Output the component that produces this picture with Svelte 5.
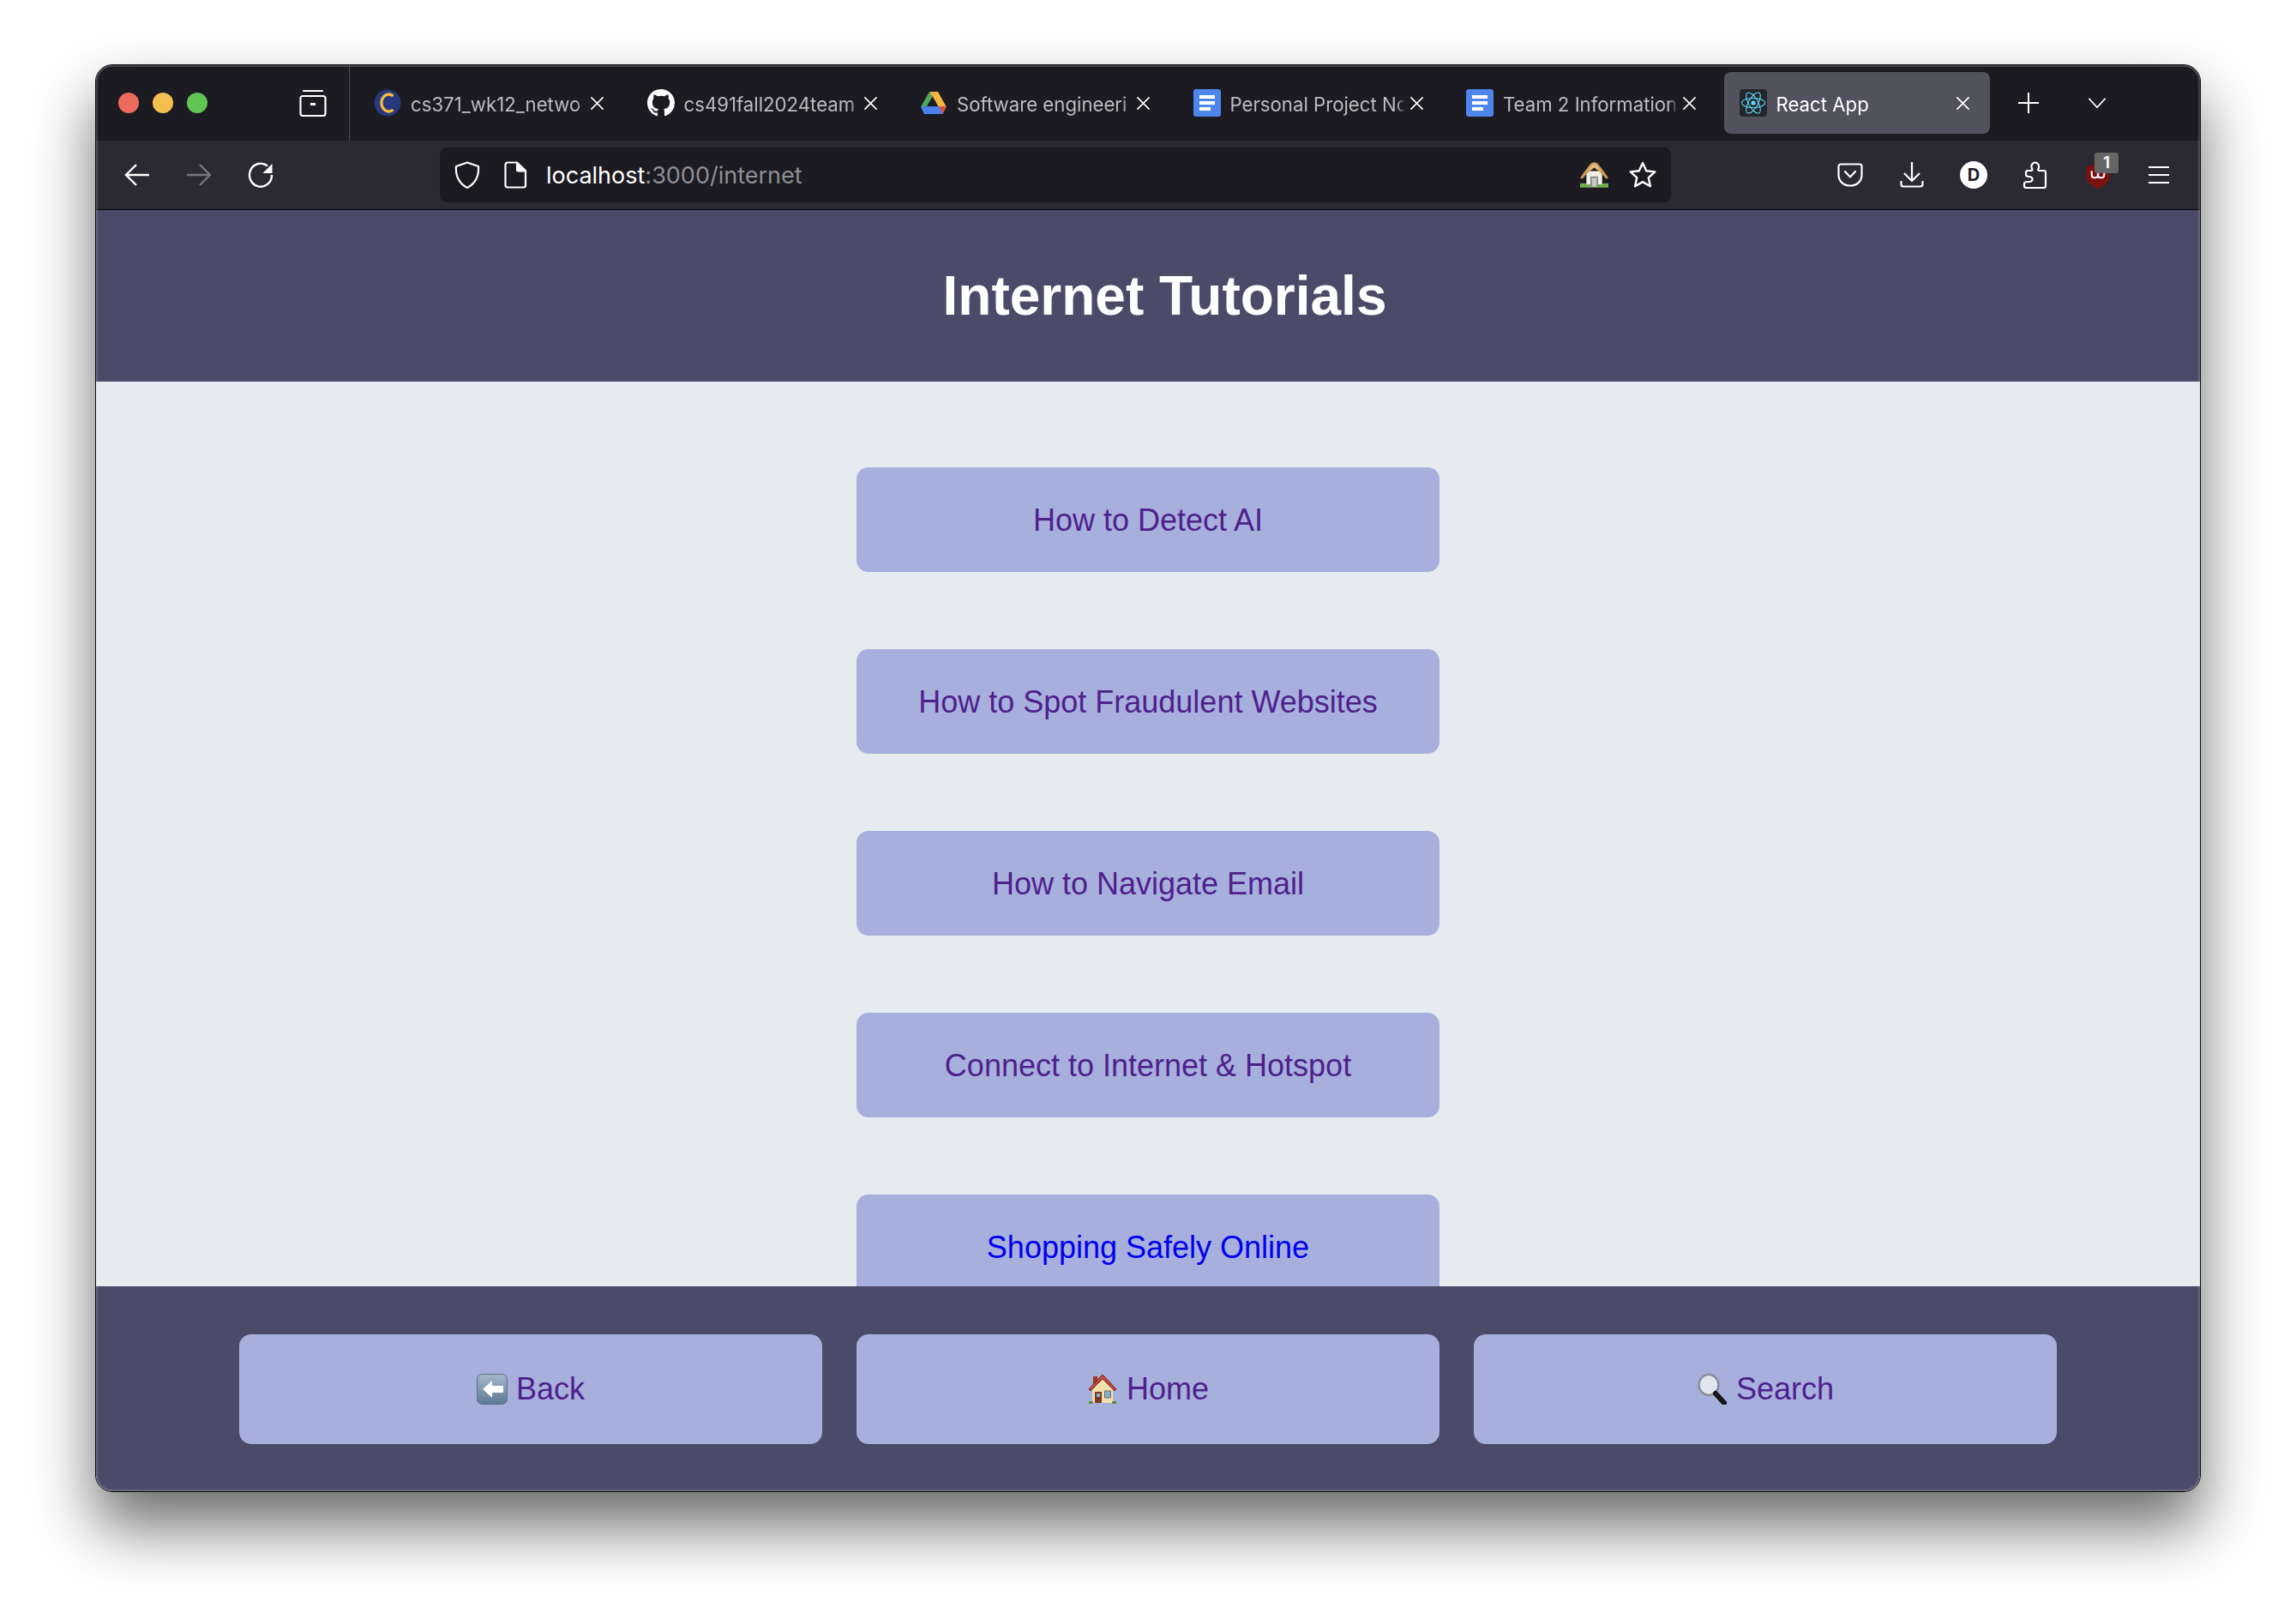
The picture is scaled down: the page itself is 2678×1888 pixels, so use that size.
<script>
  const tabs = [
    { icon: "canvas", label: "cs371_wk12_netwo" },
    { icon: "github", label: "cs491fall2024team" },
    { icon: "drive", label: "Software engineeri" },
    { icon: "docs", label: "Personal Project No" },
    { icon: "docs", label: "Team 2 Information" },
    { icon: "react", label: "React App", active: true }
  ];

  const tutorials = [
    { label: "How to Detect AI", visited: true },
    { label: "How to Spot Fraudulent Websites", visited: true },
    { label: "How to Navigate Email", visited: true },
    { label: "Connect to Internet & Hotspot", visited: true },
    { label: "Shopping Safely Online", visited: false }
  ];
</script>

{#snippet favicon(name)}
  {#if name === "canvas"}
    <svg class="fav" viewBox="0 0 32 32">
      <circle cx="16" cy="16" r="15.5" fill="#27397a" />
      <path d="M22.500 8a8.500 10 0 1 0 0 16" fill="none" stroke="#f3b93c" stroke-width="3.4" />
    </svg>
  {:else if name === "github"}
    <svg class="fav" viewBox="0 0 16 16">
      <path fill="#fff" d="M8 0C3.58 0 0 3.58 0 8c0 3.54 2.29 6.53 5.47 7.59.4.07.55-.17.55-.38 0-.19-.01-.82-.01-1.49-2.01.37-2.53-.49-2.69-.94-.09-.23-.48-.94-.82-1.13-.28-.15-.68-.52-.01-.53.63-.01 1.08.58 1.23.82.72 1.21 1.87.87 2.33.66.07-.52.28-.87.51-1.07-1.78-.2-3.64-.89-3.64-3.95 0-.87.31-1.59.82-2.15-.08-.2-.36-1.02.08-2.12 0 0 .67-.21 2.2.82.64-.18 1.32-.27 2-.27.68 0 1.36.09 2 .27 1.53-1.04 2.2-.82 2.2-.82.44 1.1.16 1.92.08 2.12.51.56.82 1.27.82 2.15 0 3.07-1.87 3.75-3.65 3.95.29.25.54.73.54 1.48 0 1.07-.01 1.93-.01 2.2 0 .21.15.46.55.38A8.013 8.013 0 0016 8c0-4.42-3.58-8-8-8z" />
    </svg>
  {:else if name === "drive"}
    <svg class="fav" viewBox="0 0 32 32">
      <path fill="#4fa85b" d="M11 3h7L7 21.5 1 20.5z" />
      <path fill="#f4b63f" d="M11.5 3H21l10 18h-9z" />
      <path fill="#4a80ec" d="M7.5 20h23.5l-4.500 9H5l-4-8.500z" />
      <path fill="#d9503f" d="M22 20h9l-4.500 9z" />
    </svg>
  {:else if name === "docs"}
    <svg class="fav" viewBox="0 0 32 32">
      <rect x="0" width="32" height="32" rx="3" fill="#4f86ec" />
      <path fill="#fff" d="M7 7h18v4H7zM7 14h18v4H7zM7 21h13v4H7z" />
    </svg>
  {:else}
    <svg class="fav" viewBox="0 0 32 32">
      <rect width="32" height="32" rx="4" fill="#23272b" />
      <g fill="none" stroke="#61dafb" stroke-width="1.1">
        <ellipse cx="16" cy="16" rx="13.500" ry="5.500" />
        <ellipse cx="16" cy="16" rx="13.500" ry="5.500" transform="rotate(60 16 16)" />
        <ellipse cx="16" cy="16" rx="13.500" ry="5.500" transform="rotate(120 16 16)" />
      </g>
      <circle cx="16" cy="16" r="2.600" fill="#61dafb" />
    </svg>
  {/if}
{/snippet}

<div class="desktop">
<div class="window">
  <div class="tabstrip">
    <div class="strip-left">
      <span class="dot red"></span>
      <span class="dot yellow"></span>
      <span class="dot green"></span>
      <svg class="ico manager" viewBox="0 0 32 32" fill="none" stroke="#fff" stroke-width="2.200">
        <rect x="1.500" y="8" width="29" height="23" rx="2.500" />
        <path d="M5 2h22" stroke-linecap="round" />
        <path d="M13 17.500h6" stroke-width="3" />
      </svg>
    </div>
    <div class="tabs">
      {#each tabs as tab}
        <div class="tab" class:active={tab.active}>
          {@render favicon(tab.icon)}
          <span class="tab-label">{tab.label}</span>
          <svg class="close" viewBox="0 0 18 18" stroke="#fff" stroke-width="1.700">
            <path d="M1.500 1.500l15 15M16.500 1.500l-15 15" />
          </svg>
        </div>
      {/each}
      <svg class="ico plus" viewBox="0 0 24 24" stroke="#fff" stroke-width="2">
        <path d="M12 0v24M0 12h24" />
      </svg>
      <svg class="ico chevron" viewBox="0 0 24 16" fill="none" stroke="#fff" stroke-width="2">
        <path d="M1 2l11 12L23 2" />
      </svg>
    </div>
  </div>

  <div class="toolbar">
    <div class="nav">
      <svg class="ico" viewBox="0 0 32 32" fill="none" stroke="#fff" stroke-width="2.400">
        <path d="M30 16H3M15 4L3 16l12 12" />
      </svg>
      <svg class="ico" viewBox="0 0 32 32" fill="none" stroke="#77767e" stroke-width="2.400">
        <path d="M2 16h27M17 4l12 12-12 12" />
      </svg>
      <svg class="ico" viewBox="0 0 32 32" fill="none" stroke="#fff" stroke-width="2.400">
        <path d="M24 5.500A13 13.500 0 1 0 29 16" />
        <path d="M29.500 3v11h-11z" fill="#fff" stroke="none" />
      </svg>
    </div>

    <div class="urlbar">
      <svg class="url-ico" viewBox="0 0 32 32" fill="none" stroke="#fff" stroke-width="2.200">
        <path d="M16 1.500L29 6c.8 11-3 19.500-13 25C6 25.500 2.200 17 3 6z" stroke-linejoin="round" />
      </svg>
      <svg class="url-ico page" viewBox="0 0 32 32" fill="none" stroke="#fff" stroke-width="2.200">
        <path d="M8 1.500h11L29 11v17a2.500 2.500 0 0 1-2.500 2.500h-18.500A2.500 2.500 0 0 1 5.500 28V4A2.500 2.500 0 0 1 8 1.500z" stroke-linejoin="round" />
        <path d="M18 1.500h1.500L29 11v1.500H20a2 2 0 0 1-2-2z" fill="#fff" stroke="none" />
      </svg>
      <span class="url"><b>localhost</b>:3000/internet</span>
      <svg class="url-home" viewBox="0 0 36 32">
        <path fill="#6fb04a" d="M0 27c6-1 9 1 18 1s12-2 18-1v5H0z" />
        <path fill="#f1efe8" d="M8 11h20v17H8z" />
        <path fill="#c9985a" d="M18 0c3 0 5 2 8 6 3 4 7 9 10 14l-3 1-7-8-8-6-8 6-7 8-3-1C3 15 7 10 10 6c3-4 5-6 8-6z" />
        <path fill="#e3bc80" d="M18 2c2 0 4 2 6 5l3 5-9-6-9 6 3-5c2-3 4-5 6-5z" />
        <path fill="#8d8d8d" d="M13 18h10v13H13z" />
        <path fill="#c8c8c8" d="M15 20h6v11h-6z" />
      </svg>
      <svg class="url-star" viewBox="0 0 32 32" fill="none" stroke="#fff" stroke-width="2.400">
        <path d="M16 2l4.200 9.300 10.100 1.100-7.500 6.800 2.100 10L16 24.100 7.100 29.200l2.100-10L1.700 12.400l10.100-1.100z" stroke-linejoin="round" />
      </svg>
    </div>

    <div class="tools">
      <svg class="ico" viewBox="0 0 32 32" fill="none" stroke="#fff" stroke-width="2.200">
        <path d="M5 3.500h22A2.500 2.500 0 0 1 29.500 6v10c0 7.500-6 12.500-13.500 12.500S2.500 23.500 2.500 16V6A2.500 2.500 0 0 1 5 3.500z" />
        <path d="M10 12l6 6.500 6-6.500" stroke-linecap="round" />
      </svg>
      <svg class="ico" viewBox="0 0 32 32" fill="none" stroke="#fff" stroke-width="2.200">
        <path d="M16 1v21M7 14l9 9 9-9" />
        <path d="M3.500 23v4a2.500 2.500 0 0 0 2.500 2.500h20a2.500 2.500 0 0 0 2.500-2.500v-4" />
      </svg>
      <span class="profile">D</span>
      <svg class="ico" viewBox="0 0 32 32" fill="none" stroke="#fff" stroke-width="2.200">
        <path d="M5 31h21a2 2 0 0 0 2-2V13a2 2 0 0 0-2-2h-5.500c-1.200 0-1.500-1-1-2.200.9-2 .8-3.300 0-4.800-.8-1.500-2.200-2.500-3.800-2.500s-3 1-3.800 2.500c-.7 1.500-.6 2.900.2 4.800.5 1.200.2 2.200-1 2.200H7a2 2 0 0 0-2 2v2.500c0 2 1.500 2.500 3.500 2.500s4 1 4 3-2 3-4 3-5.500 0-5.500 2V29a2 2 0 0 0 2 2z" stroke-linejoin="round" />
      </svg>
      <div class="ublock">
        <svg class="shield" viewBox="0 0 26 28">
          <path fill="#7a1210" d="M13 0l13 3v11c0 6-5 11-13 14C5 25 0 20 0 14V3z" />
          <path fill="none" stroke="#fff" stroke-width="2" d="M6 8v4c0 5 7 5 7 0v-2 2c0 5 7 5 7 0V8" />
        </svg>
        <span class="badge">1</span>
      </div>
      <svg class="ico" viewBox="0 0 32 32" stroke="#fff" stroke-width="2.200">
        <path d="M4 7h24M4 16h24M4 25h24" />
      </svg>
    </div>
  </div>

  <header class="title">
    <h1>Internet Tutorials</h1>
  </header>

  <main class="list">
    {#each tutorials as item}
      <a class="tutorial" class:fresh={!item.visited} href="#/">{item.label}</a>
    {/each}
  </main>

  <footer class="bottom">
    <button class="foot-btn">
      <svg class="emoji" viewBox="0 0 36 36">
        <defs>
          <linearGradient id="backFill" x1="0" y1="0" x2="0" y2="1">
            <stop offset="0" stop-color="#a5b8cb" />
            <stop offset="1" stop-color="#5f7995" />
          </linearGradient>
        </defs>
        <rect x="0.500" y="0.500" width="35" height="35" rx="6" fill="url(#backFill)" stroke="#5c7087" />
        <path fill="#fff" d="M7 18L18 8v6h13v8H18v6z" />
      </svg>
      Back
    </button>
    <button class="foot-btn">
      <svg class="emoji" viewBox="0 0 36 36">
        <path fill="#9c3a2c" d="M7 3h5v9H7z" />
        <path fill="#f1dfae" d="M6 15L18 5l12 10v19H6z" />
        <path fill="#c9483a" stroke="#6b2a22" stroke-width="1" d="M18 1L34 18l-2 2L18 6 4 20l-2-2z" />
        <path fill="#7a3b28" d="M9 21h8v13H9z" />
        <path fill="#7fb2d6" stroke="#77674a" d="M20.500 20h7v8h-7z" />
        <path fill="#7fb2d6" d="M11 23h4v4h-4z" />
        <path fill="#5c8f3a" d="M2 32h5v3H2zM29 32h5v3h-5z" />
      </svg>
      Home
    </button>
    <button class="foot-btn">
      <svg class="emoji" viewBox="0 0 36 36">
        <ellipse cx="14" cy="13" rx="11.500" ry="12" fill="#e2e4ee" stroke="#8c8f96" stroke-width="2.500" />
        <path d="M22 23l10 11" stroke="#17171a" stroke-width="6" stroke-linecap="round" />
      </svg>
      Search
    </button>
  </footer>
</div>
</div>

<style>
  :global(body) {
    background: #fff;
  }

  .desktop {
    box-sizing: border-box;
    height: 1888px;
    padding: 75px 0 0 111px;
    overflow: hidden;
  }

  .window {
    position: relative;
    box-sizing: border-box;
    width: 2456px;
    height: 1665px;
    border: 1px solid #0c0c0e;
    border-radius: 20px;
    overflow: hidden;
    display: flex;
    flex-direction: column;
    background: #e7ebef;
    box-shadow: 0 40px 72px rgba(0, 0, 0, 0.58);
  }
  .window::after {
    content: "";
    position: absolute;
    inset: 0;
    border-radius: 19px;
    box-shadow: inset 0 0 0 2px rgba(255, 255, 255, 0.16);
    pointer-events: none;
  }

  .tabstrip {
    display: flex;
    align-items: stretch;
    height: 88px;
    flex: none;
    background: #1c1b22;
    font-family: Inter, "Liberation Sans", sans-serif;
  }
  .strip-left {
    box-sizing: border-box;
    width: 296px;
    display: flex;
    align-items: center;
    gap: 16px;
    padding-left: 26px;
    border-right: 1px solid #4a4a50;
  }
  .dot {
    width: 24px;
    height: 24px;
    border-radius: 50%;
  }
  .red { background: #ec6a5e; }
  .yellow { background: #f4bf4f; }
  .green { background: #61c554; }

  .ico {
    width: 40px;
    height: 32px;
    flex: none;
  }
  .manager {
    margin-left: 91px;
    width: 32px;
  }

  .tabs {
    display: flex;
    align-items: center;
    gap: 8.5px;
    padding-left: 10px;
  }
  .tab {
    box-sizing: border-box;
    width: 310px;
    height: 72px;
    flex: none;
    display: flex;
    align-items: center;
    padding-left: 18px;
    border-radius: 8px;
    color: #bcbcc0;
    font-size: 22.2px;
  }
  .tab.active {
    background: #52525e;
    color: #fff;
  }
  .fav {
    width: 32px;
    height: 32px;
    flex: none;
  }
  .tab-label {
    width: 204px;
    margin-left: 11px;
    padding-top: 3px;
    white-space: nowrap;
    overflow: hidden;
    mask-image: linear-gradient(to right, #000 95%, transparent);
  }
  .close {
    width: 17px;
    height: 17px;
    margin-left: 5px;
    flex: none;
  }
  .plus {
    width: 24px;
    height: 24px;
    margin-left: 25px;
  }
  .chevron {
    width: 24px;
    height: 14px;
    margin-left: 47px;
  }

  .toolbar {
    box-sizing: border-box;
    display: flex;
    align-items: center;
    height: 81px;
    flex: none;
    padding-left: 28px;
    background: #2b2a33;
    border-bottom: 1px solid #0c0c0e;
  }
  .nav {
    display: flex;
    gap: 32px;
  }
  .urlbar {
    box-sizing: border-box;
    width: 1436px;
    height: 64px;
    margin-left: 189px;
    flex: none;
    display: flex;
    align-items: center;
    padding: 0 16px;
    border-radius: 8px;
    background: #1c1b22;
  }
  .url-ico {
    width: 32px;
    height: 32px;
    flex: none;
  }
  .page {
    margin-left: 23px;
  }
  .url {
    margin-left: 21px;
    color: #8f8f94;
    font: 27px Inter, "Liberation Sans", sans-serif;
  }
  .url b {
    color: #fff;
    font-weight: 400;
  }
  .url-home {
    width: 33px;
    height: 30px;
    margin-left: auto;
  }
  .url-star {
    width: 34px;
    height: 32px;
    margin-left: 23px;
  }

  .tools {
    display: flex;
    align-items: center;
    gap: 32px;
    margin-left: 189px;
  }
  .profile {
    width: 32px;
    height: 32px;
    margin: 0 4px;
    border-radius: 50%;
    background: #fff;
    color: #1c1b22;
    font: 700 20px/32px Inter, "Liberation Sans", sans-serif;
    text-align: center;
  }
  .ublock {
    position: relative;
    width: 40px;
    height: 32px;
  }
  .shield {
    position: absolute;
    left: 7px;
    top: 3px;
    width: 28px;
    height: 29px;
  }
  .badge {
    position: absolute;
    left: 17px;
    top: -10px;
    width: 28px;
    height: 24px;
    border-radius: 3px;
    background: #666;
    color: #fff;
    font: 600 19px/24px Inter, "Liberation Sans", sans-serif;
    text-align: center;
  }

  .title {
    height: 200px;
    flex: none;
    display: flex;
    align-items: center;
    justify-content: center;
    padding-left: 39px;
    background: #4b4a68;
  }
  h1 {
    margin: 0;
    color: #fff;
    font: 700 64px "Liberation Sans", Arial, sans-serif;
  }

  .list {
    flex: 1;
    min-height: 0;
    overflow: hidden;
    display: flex;
    flex-direction: column;
    align-items: center;
    gap: 90px;
    padding-top: 100px;
  }
  .tutorial {
    box-sizing: border-box;
    width: 680px;
    height: 122px;
    flex: none;
    display: flex;
    align-items: center;
    justify-content: center;
    padding-top: 2px;
    border-radius: 14px;
    background: #a7afdd;
    color: #4f1f8c;
    font: 36px "Liberation Sans", Arial, sans-serif;
    text-decoration: none;
  }
  .tutorial.fresh {
    color: #0000ee;
  }

  .bottom {
    height: 239px;
    box-sizing: border-box;
    flex: none;
    display: flex;
    justify-content: center;
    gap: 40px;
    padding-top: 56px;
    background: #4b4a68;
  }
  .foot-btn {
    width: 680px;
    height: 128px;
    display: flex;
    align-items: center;
    justify-content: center;
    gap: 10px;
    border: 0;
    border-radius: 14px;
    background: #a7afdd;
    color: #4f1f8c;
    font: 36px "Liberation Sans", Arial, sans-serif;
  }
  .emoji {
    width: 36px;
    height: 36px;
    flex: none;
  }
</style>
